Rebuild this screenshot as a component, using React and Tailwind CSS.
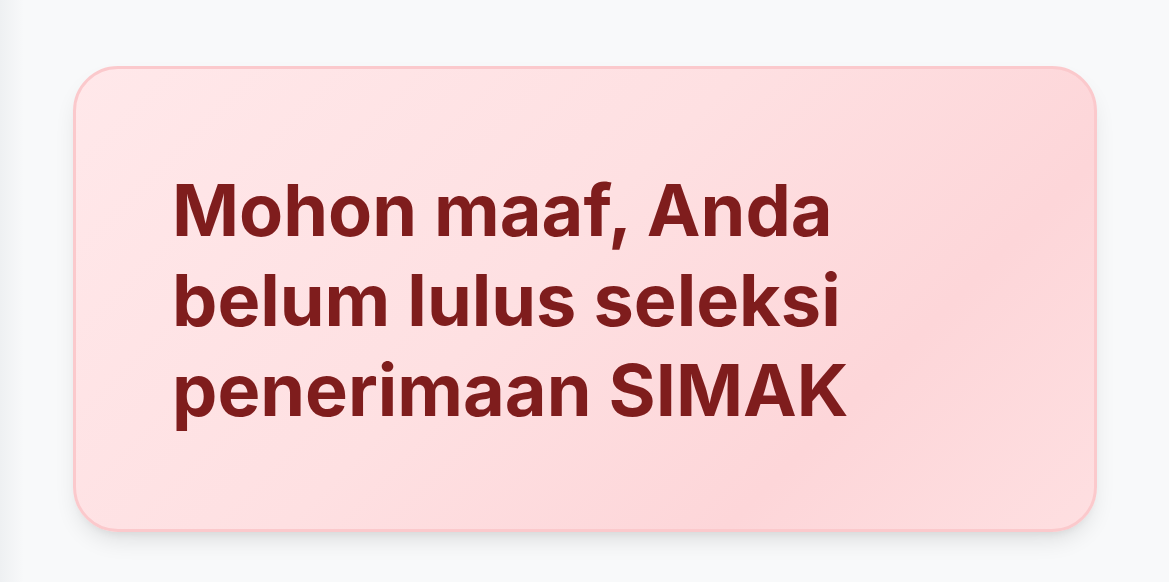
export default function App() {
  return (
    <div className="min-h-[582px] w-full bg-[linear-gradient(to_right,#eef0f2_0px,#f8f9fa_24px,#f8f9fa_100%)] pl-[73px] pr-[72px] pt-[66px] font-['Inter',sans-serif]">
      <div className="rounded-[45px] border-[3px] border-[#fbc9cc] bg-[linear-gradient(135deg,#ffe8ea_0%,#fee0e2_45%,#fdd6d9_75%,#fedfe1_100%)] px-[96px] pt-[96px] pb-[94px] shadow-[0_12px_24px_-6px_rgba(0,0,0,0.12),0_6px_10px_-6px_rgba(0,0,0,0.08)]">
        <h1 className="text-[72px] font-bold leading-[90px] text-[#7f1d1d]">
          Mohon maaf, Anda belum lulus seleksi penerimaan SIMAK
        </h1>
      </div>
    </div>
  );
}
